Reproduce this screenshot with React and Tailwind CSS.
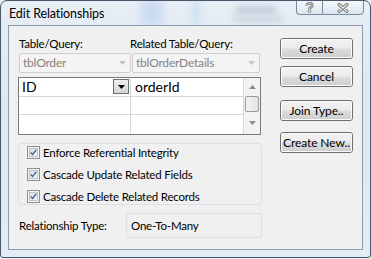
import React from 'react';

const font = { fontFamily: 'Lato, "Noto Sans", sans-serif' };

const Check = () => (
  <div className="w-[13px] h-[13px] border border-[#8e8f8f] bg-[#f4f4f4] p-[1px] shrink-0">
    <div className="w-full h-full border border-[#b8c4d2] bg-[linear-gradient(135deg,#d6dde6,#f6f8fa)] flex items-center justify-center">
      <svg width="9" height="9" viewBox="0 0 9 9">
        <path d="M1 4.5 L3.4 7 L8 1.2" fill="none" stroke="#4a5d86" strokeWidth="1.8" />
      </svg>
    </div>
  </div>
);

const Btn = ({ children, className }) => (
  <button className={`w-[73px] h-[21px] rounded-[3px] border border-[#707070] p-0 ${className}`}>
    <div className="w-full h-full rounded-[2px] border border-[#fcfcfc] bg-[linear-gradient(#f2f2f2_0%,#ebebeb_48%,#dddddd_52%,#cfcfcf_100%)] flex items-center justify-center text-[12px] tracking-[-0.1px] text-black leading-none whitespace-nowrap">
      {children}
    </div>
  </button>
);

const Arrow = ({ color = '#9a9a9a', up }) => (
  <svg width="7" height="4" viewBox="0 0 7 4">
    <path d={up ? 'M0 4 L3.5 0 L7 4 Z' : 'M0 0 L7 0 L3.5 4 Z'} fill={color} />
  </svg>
);

const Combo = ({ w, text }) => (
  <div className={`${w} h-[20px] rounded-[2px] border border-[#cfcfcf] bg-[#f4f4f4] flex items-center pl-[3px] pr-[4px]`}>
    <span className="flex-1 text-[12px] tracking-[-0.2px] text-[#838383] leading-none">{text}</span>
    <Arrow color="#c4c4c4" />
  </div>
);

export default function App() {
  return (
    <div className="w-[371px] h-[259px] bg-[#eef2f7] overflow-hidden" style={font}>
      <div className="relative w-[371px] h-[258px] rounded-t-[7px] rounded-b-[3px] border border-[#47566a] bg-[linear-gradient(#e8eef6,#dfe7f1_40%,#e4ebf3)] overflow-hidden">
        {/* blurred background seen through the glass */}
        <div className="absolute left-[140px] top-0 w-[22px] h-[24px] bg-[#c9dbf0] blur-[4px]" />
        <div className="absolute left-[190px] top-0 w-[10px] h-[24px] bg-[#d3e2f2] blur-[3px]" />
        <div className="absolute left-[235px] top-[6px] w-[40px] h-[6px] bg-[#b9c3cf] blur-[3px]" />
        <div className="absolute left-[232px] top-[16px] w-[50px] h-[5px] bg-[#c7d0db] blur-[3px]" />

        {/* title bar */}
        <div className="relative flex h-[24px]">
          <span className="pl-[8px] pt-[4px] text-[12.5px] tracking-[-0.1px] text-black leading-[18px]">Edit Relationships</span>
          <div className="ml-auto mr-[6px] flex h-[15px] -mt-[1px]">
            <div className="w-[26px] h-full rounded-bl-[4px] border border-[#7a889b] border-r-0 bg-[linear-gradient(#f4f7fb,#dce5ef)] flex items-center justify-center">
              <svg width="9" height="11" viewBox="0 0 9 11">
                <path d="M1.8 3.4 C1.8 0.6 7.2 0.6 7.2 3.4 C7.2 5.4 4.5 5.2 4.5 7.2" fill="none" stroke="#6b6b6b" strokeWidth="2.6" />
                <path d="M1.8 3.4 C1.8 0.6 7.2 0.6 7.2 3.4 C7.2 5.4 4.5 5.2 4.5 7.2" fill="none" stroke="#f4f4f4" strokeWidth="1" />
                <circle cx="4.5" cy="9.3" r="1.4" fill="#f4f4f4" stroke="#6b6b6b" strokeWidth="0.8" />
              </svg>
            </div>
            <div className="w-[42px] h-full rounded-br-[4px] border border-[#7a889b] bg-[linear-gradient(#f4f7fb,#dce5ef)] flex items-center justify-center">
              <svg width="12" height="10" viewBox="0 0 12 10">
                <path d="M2 1.5 L10 8.5 M10 1.5 L2 8.5" stroke="#6b6b6b" strokeWidth="3" strokeLinecap="round" />
                <path d="M2 1.5 L10 8.5 M10 1.5 L2 8.5" stroke="#f4f4f4" strokeWidth="1.2" strokeLinecap="round" />
              </svg>
            </div>
          </div>
        </div>

        {/* client area */}
        <div className="relative ml-[7px] w-[355px] h-[225px] border border-[#8b9aad] bg-[#f0f0f0] flex pl-[9px] pt-[10px]">
          {/* left column */}
          <div className="w-[244px] flex flex-col">
            <div className="flex h-[16px] text-[11.5px] tracking-[-0.2px] text-black leading-[16px]">
              <span className="w-[112px] pl-[1px]">Table/Query:</span>
              <span>Related Table/Query:</span>
            </div>
            <div className="mt-[1px] flex gap-[1px] pl-[1px]">
              <Combo w="w-[112px]" text="tblOrder" />
              <Combo w="w-[128px]" text="tblOrderDetails" />
            </div>

            <div className="mt-[4px] w-[243px] h-[58px] border border-[#7a7a7a] bg-white flex">
              <div className="flex-1 flex flex-col">
                {[0, 1, 2].map((i) => (
                  <div key={i} className={`flex h-[19px] ${i < 2 ? 'border-b border-[#d7d7d7]' : ''}`}>
                    <div className="w-[112px] border-r border-[#d7d7d7] flex items-center pl-[3px] pr-[1px]">
                      {i === 0 && (
                        <>
                          <span className="flex-1 text-[14px] text-black leading-none">ID</span>
                          <div className="w-[16px] h-[15px] border border-[#6e6e6e] bg-[linear-gradient(#f0f0f0,#d4d4d4)] flex items-center justify-center">
                            <Arrow color="#000" />
                          </div>
                        </>
                      )}
                    </div>
                    <div className="flex-1 flex items-center pl-[4px]">
                      {i === 0 && <span className="text-[14px] text-black leading-none">orderId</span>}
                    </div>
                  </div>
                ))}
              </div>
              <div className="w-[17px] border-l border-[#d7d7d7] bg-[#f3f3f3] flex flex-col items-center">
                <div className="h-[18px] flex items-center justify-center"><Arrow up color="#8a8a8a" /></div>
                <div className="w-[14px] h-[16px] rounded-[2px] border border-[#9a9a9a] bg-[linear-gradient(90deg,#f3f3f3,#e2e2e2)]" />
                <div className="flex-1 flex items-center justify-center"><Arrow color="#8a8a8a" /></div>
              </div>
            </div>

            <div className="mt-[8px] w-[244px] h-[62px] rounded-[3px] border border-[#dcdfe3] flex flex-col pl-[8px] pt-[2px] gap-[9px]">
              {['Enforce Referential Integrity', 'Cascade Update Related Fields', 'Cascade Delete Related Records'].map((t) => (
                <div key={t} className="flex items-center gap-[3px] h-[13px]">
                  <Check />
                  <span className="text-[11.5px] tracking-[-0.2px] text-black leading-none">{t}</span>
                </div>
              ))}
            </div>

            <div className="mt-[8px] flex items-center h-[25px]">
              <span className="w-[108px] pl-[1px] text-[11.5px] tracking-[-0.2px] text-black leading-none">Relationship Type:</span>
              <div className="w-[136px] h-[25px] rounded-[2px] border border-[#dcdfe3] flex items-center pl-[4px] text-[11.5px] tracking-[-0.2px] text-black leading-none">
                One-To-Many
              </div>
            </div>
          </div>

          {/* right column */}
          <div className="ml-[18px] flex flex-col pt-[2px]">
            <Btn>Create</Btn>
            <Btn className="mt-[7px]">Cancel</Btn>
            <Btn className="mt-[13px]">Join Type..</Btn>
            <Btn className="mt-[11px]">Create New..</Btn>
          </div>
        </div>
      </div>
    </div>
  );
}
